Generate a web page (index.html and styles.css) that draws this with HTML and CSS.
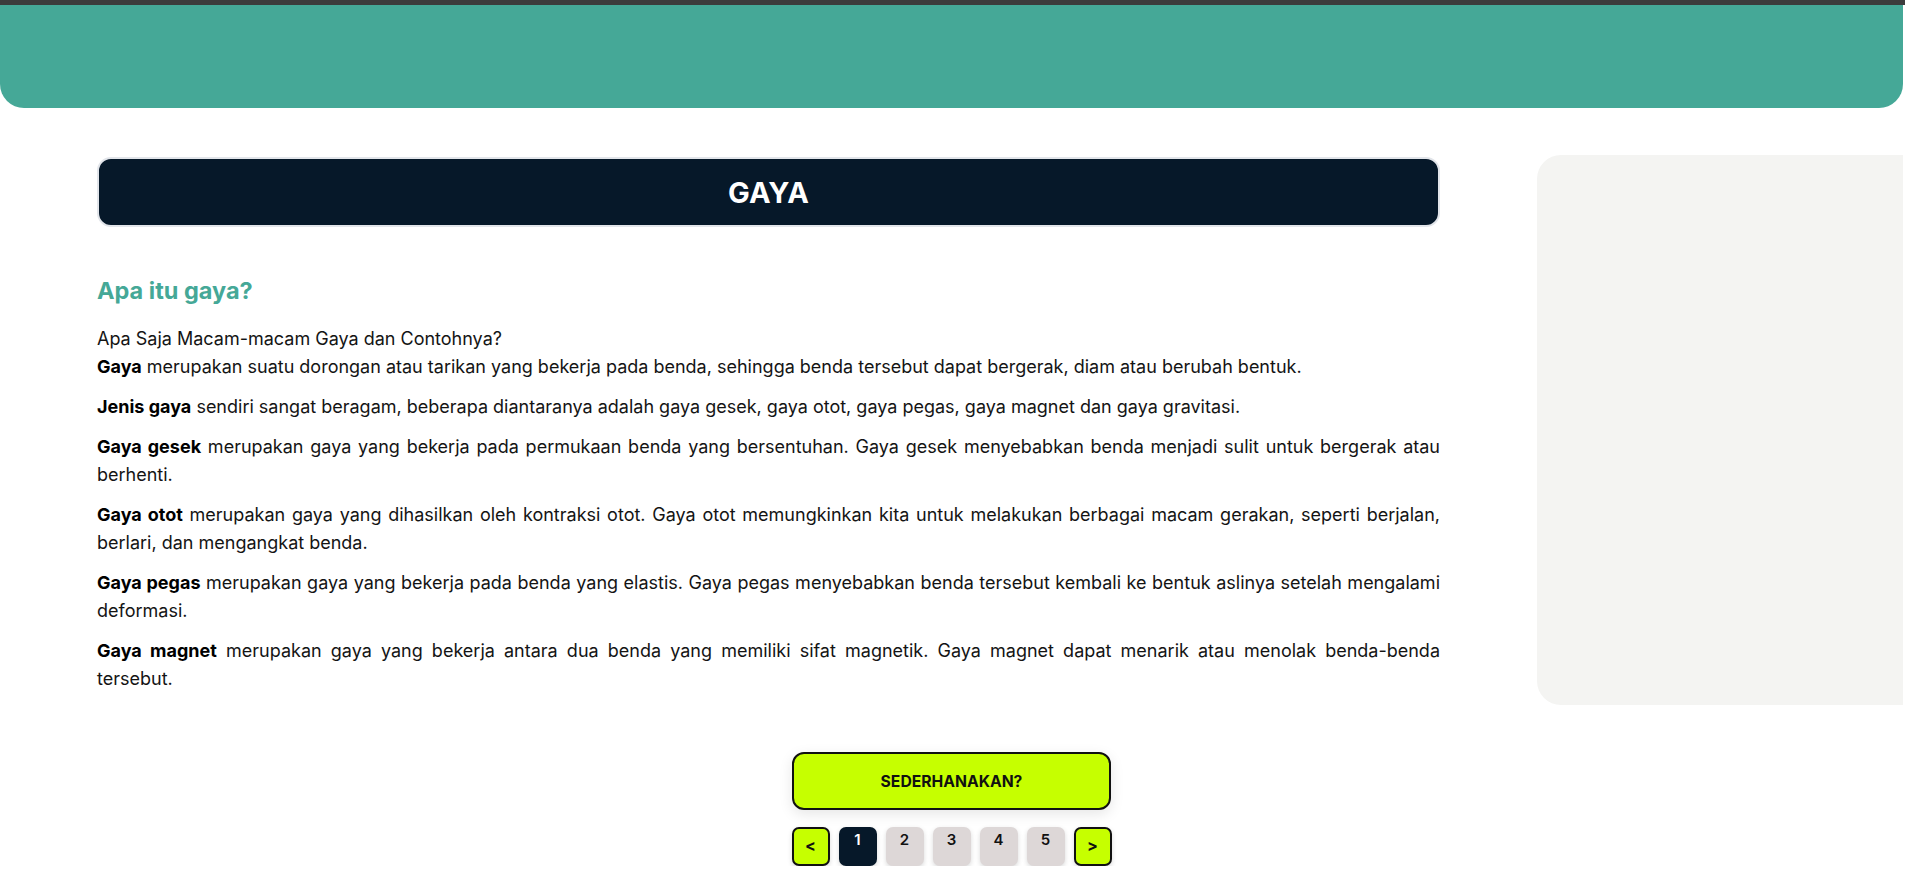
FILE: index.html
```html
<!DOCTYPE html>
<html lang="id">
<head>
<meta charset="utf-8">
<title>Gaya</title>
<link rel="stylesheet" href="styles.css">
</head>
<body>
<div class="topbar"></div>
<header class="header"></header>
<div class="layout">
  <main class="main">
    <div class="title-box"><h1 class="title">GAYA</h1></div>
    <h2 class="heading">Apa itu gaya?</h2>
    <p class="para">Apa Saja Macam-macam Gaya dan Contohnya?<br><b>Gaya</b> merupakan suatu dorongan atau tarikan yang bekerja pada benda, sehingga benda tersebut dapat bergerak, diam atau berubah bentuk.</p>
    <p class="para"><b>Jenis gaya</b> sendiri sangat beragam, beberapa diantaranya adalah gaya gesek, gaya otot, gaya pegas, gaya magnet dan gaya gravitasi.</p>
    <p class="para"><b>Gaya gesek</b> merupakan gaya yang bekerja pada permukaan benda yang bersentuhan. Gaya gesek menyebabkan benda menjadi sulit untuk bergerak atau berhenti.</p>
    <p class="para"><b>Gaya otot</b> merupakan gaya yang dihasilkan oleh kontraksi otot. Gaya otot memungkinkan kita untuk melakukan berbagai macam gerakan, seperti berjalan, berlari, dan mengangkat benda.</p>
    <p class="para"><b>Gaya pegas</b> merupakan gaya yang bekerja pada benda yang elastis. Gaya pegas menyebabkan benda tersebut kembali ke bentuk aslinya setelah mengalami deformasi.</p>
    <p class="para"><b>Gaya magnet</b> merupakan gaya yang bekerja antara dua benda yang memiliki sifat magnetik. Gaya magnet dapat menarik atau menolak benda-benda tersebut.</p>
  </main>
  <aside class="sidebar"></aside>
</div>
<section class="actions">
  <button class="simplify">SEDERHANAKAN?</button>
  <nav class="pager">
    <button class="pg arrow">&lt;</button>
    <button class="pg num active">1</button>
    <button class="pg num">2</button>
    <button class="pg num">3</button>
    <button class="pg num">4</button>
    <button class="pg num">5</button>
    <button class="pg arrow">&gt;</button>
  </nav>
</section>
</body>
</html>
```

FILE: styles.css
```css
* { box-sizing: border-box; }
html, body { margin: 0; padding: 0; background: #ffffff; }
body {
  font-family: Inter, "Noto Sans", sans-serif;
  color: #141414;
  padding-right: 2px;
}
.topbar { height: 5px; background: #3c3c3c; margin-right: -2px; }
.header {
  height: 103px;
  background: #45a897;
  border-radius: 0 0 24px 24px;
}
.layout {
  display: flex;
  align-items: flex-start;
  gap: 97px;
  padding: 47px 0 0 97px;
}
.main { width: 1343px; padding-top: 2px; }
.sidebar {
  flex: 1;
  height: 550px;
  background: #f4f4f2;
  border-radius: 24px 0 0 24px;
}
.title-box {
  height: 70px;
  background: #061829;
  border: 2px solid #e2e5ea;
  border-radius: 14px;
  display: flex;
  align-items: center;
  justify-content: center;
}
.title {
  margin: 0;
  color: #ffffff;
  font-size: 29px;
  font-weight: 700;
}
.heading {
  margin: 50px 0 20px;
  color: #45a897;
  font-size: 23.5px;
  line-height: 28px;
  font-weight: 700;
}
.para {
  margin: 0 0 12px;
  font-size: 18px;
  line-height: 28px;
  text-align: justify;
}
.para b { font-weight: 700; color: #000; }
.actions {
  margin-top: 47px;
  display: flex;
  flex-direction: column;
  align-items: center;
  gap: 17px;
}
.simplify {
  width: 319px;
  height: 58px;
  background: #c6ff00;
  border: 2px solid #111111;
  border-radius: 12px;
  font-family: Inter, sans-serif;
  font-size: 15.7px;
  font-weight: 700;
  color: #111111;
  box-shadow: 0 4px 14px rgba(0,0,0,0.10);
}
.pager { display: flex; gap: 9px; }
.pg {
  width: 38px;
  height: 39px;
  border-radius: 7px;
  font-family: Inter, sans-serif;
  font-size: 15px;
  font-weight: 600;
  color: #111111;
  box-shadow: 0 2px 5px rgba(0,0,0,0.15);
  padding: 0;
}
.num {
  background: #ddd7d7;
  border: none;
  line-height: 20px;
  padding-top: 3px;
  display: flex;
  justify-content: center;
  align-items: flex-start;
}
.num.active { background: #061829; color: #ffffff; }
.arrow {
  background: #c6ff00;
  border: 2px solid #111111;
  display: flex;
  align-items: center;
  justify-content: center;
  padding-bottom: 3px;
  font-size: 16px;
  font-weight: 700;
}
```
